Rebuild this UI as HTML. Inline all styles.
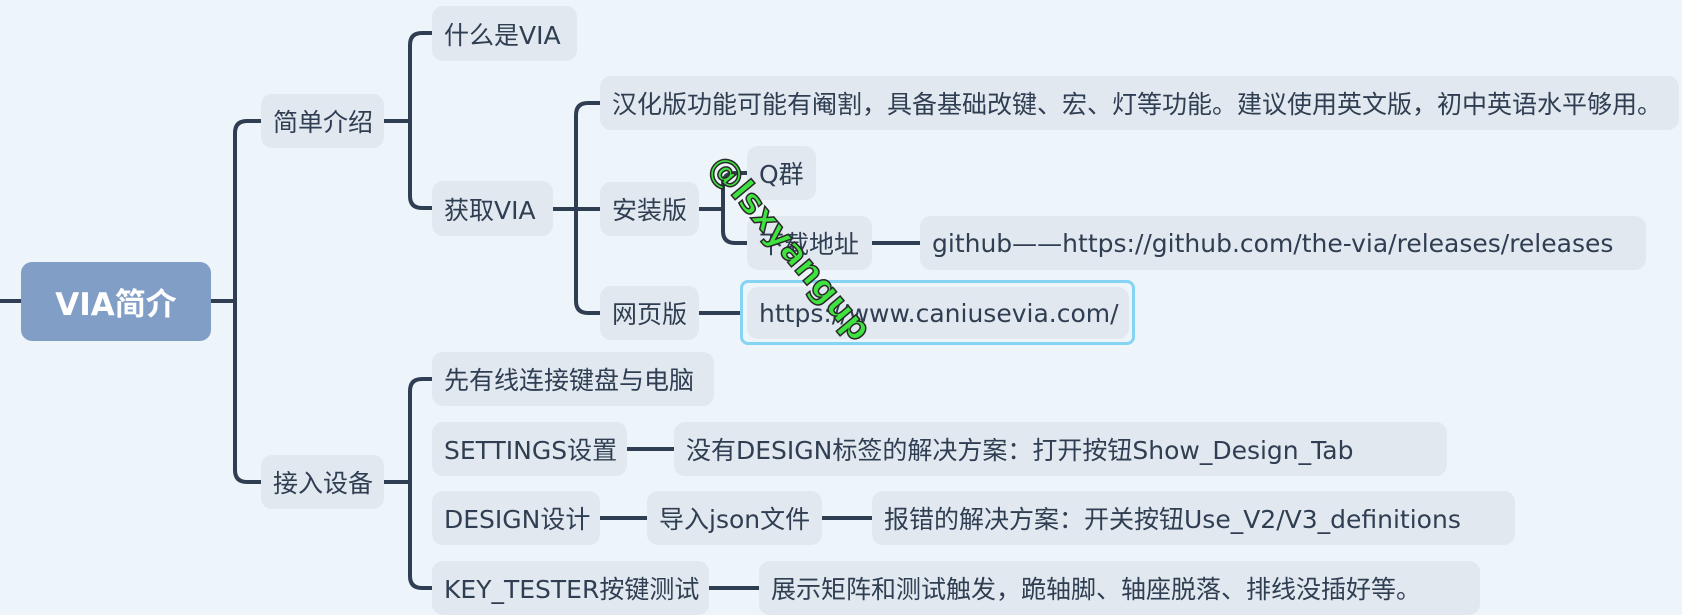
<!DOCTYPE html>
<html><head><meta charset="utf-8"><style>
html,body{margin:0;padding:0}
body{width:1682px;height:613px;background:#edf4fa;position:relative;overflow:hidden;font-family:"DejaVu Sans","Noto Sans CJK SC",sans-serif;color:#2f3e52}
.n{position:absolute;background:#e2e8ef;border-radius:11px;font-size:25px;display:flex;align-items:center;padding-left:12px;box-sizing:border-box;white-space:nowrap;overflow:visible}
svg{position:absolute;left:0;top:0}
.wm{position:absolute;left:655px;top:228px;font:bold 34px "DejaVu Sans",sans-serif;color:#3fe33f;-webkit-text-stroke:1.5px #2a2a2a;transform:rotate(50deg);transform-origin:center;width:270px;text-align:center}
</style></head><body>
<svg width="1682" height="613" fill="none" stroke="#2f3e52" stroke-width="4">
<path d="M0 301H21M211 301H235M261 121H247Q235 121 235 133V470Q235 482 247 482H261"/>
<path d="M384 121H410M432 33H422Q410 33 410 45V196Q410 208 422 208H432"/>
<path d="M553 209H600M600 103H588Q576 103 576 115V301Q576 313 588 313H600"/>
<path d="M699 209H723M747 173H735Q723 173 723 185V231Q723 243 735 243H747"/>
<path d="M872 243H920M699 313H742"/>
<path d="M384 482H410M432 379H422Q410 379 410 391V576Q410 588 422 588H432"/>
<path d="M627 449H674M600 518H647M822 518H872M709 588H759"/>
</svg>
<div class="n" style="left:21px;top:262px;width:190px;height:79px;background:#819fc6;color:#fff;font-size:31px;font-weight:bold;justify-content:center;padding:0">VIA简介</div>
<div class="n" style="left:261px;top:94px;width:123px;height:54px">简单介绍</div>
<div class="n" style="left:432px;top:6px;width:145px;height:55px">什么是VIA</div>
<div class="n" style="left:432px;top:181px;width:121px;height:55px">获取VIA</div>
<div class="n" style="left:600px;top:76px;width:1079px;height:54px">汉化版功能可能有阉割，具备基础改键、宏、灯等功能。建议使用英文版，初中英语水平够用。</div>
<div class="n" style="left:600px;top:182px;width:99px;height:54px">安装版</div>
<div class="n" style="left:747px;top:146px;width:69px;height:54px">Q群</div>
<div class="n" style="left:747px;top:216px;width:125px;height:54px">下载地址</div>
<div class="n" style="left:920px;top:216px;width:726px;height:54px">github——https://github.com/the-via/releases/releases</div>
<div class="n" style="left:600px;top:286px;width:99px;height:54px">网页版</div>
<div style="position:absolute;left:740px;top:280px;width:395px;height:65px;border:3px solid #86d4f4;border-radius:8px;box-sizing:border-box"></div>
<div class="n" style="left:747px;top:287px;width:382px;height:52px">https://www.caniusevia.com/</div>
<div class="n" style="left:261px;top:455px;width:123px;height:54px">接入设备</div>
<div class="n" style="left:432px;top:352px;width:282px;height:54px">先有线连接键盘与电脑</div>
<div class="n" style="left:432px;top:422px;width:195px;height:54px">SETTINGS设置</div>
<div class="n" style="left:674px;top:422px;width:773px;height:54px">没有DESIGN标签的解决方案：打开按钮Show_Design_Tab</div>
<div class="n" style="left:432px;top:491px;width:168px;height:54px">DESIGN设计</div>
<div class="n" style="left:647px;top:491px;width:175px;height:54px">导入json文件</div>
<div class="n" style="left:872px;top:491px;width:643px;height:54px">报错的解决方案：开关按钮Use_V2/V3_definitions</div>
<div class="n" style="left:432px;top:561px;width:277px;height:54px">KEY_TESTER按键测试</div>
<div class="n" style="left:759px;top:561px;width:721px;height:54px">展示矩阵和测试触发，跪轴脚、轴座脱落、排线没插好等。</div>
<div class="wm">@lsxyangup</div>
</body></html>
